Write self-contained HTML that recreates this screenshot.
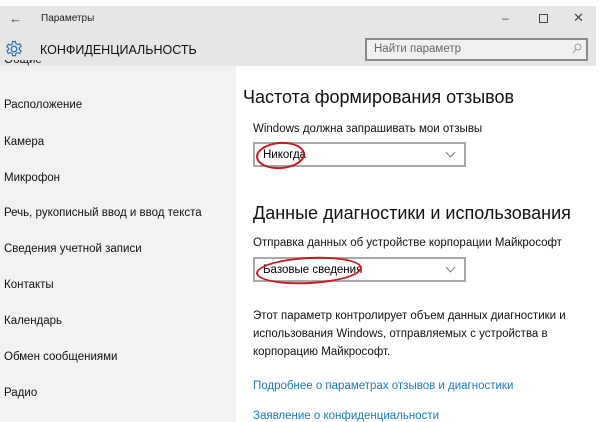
<!DOCTYPE html>
<html><head><meta charset="utf-8"><style>
*{margin:0;padding:0;box-sizing:border-box}
body{width:611px;height:422px;background:#fff;position:relative;overflow:hidden;font-family:"Liberation Sans","DejaVu Sans",sans-serif;color:#000}
.a{position:absolute;white-space:nowrap}
#hdr{position:absolute;left:0;top:6px;width:596px;height:60px;background:#e6e6e6}
#side{position:absolute;left:0;top:66px;width:236px;height:356px;background:#f2f2f2}
.si{position:absolute;left:4px;font-size:11.5px;color:#111}
.dd{position:absolute;left:253px;width:213px;height:25px;border:2px solid #a8a8a8;background:#fff;font-size:11.5px;padding:5px 0 0 8px}
.dd:after{content:"";position:absolute;right:10px;top:5px;width:6px;height:6px;border-right:1px solid #777;border-bottom:1px solid #777;transform:rotate(45deg)}
.ov{position:absolute;border:2px solid #c8191e;border-radius:50%}
.h{font-size:18px;color:#111;left:243px}
.l{font-size:11.5px;left:253px;color:#111}
.lk{font-size:11.5px;left:253px;color:#1a7ac0}
</style></head><body>
<div id="hdr"></div>
<div id="side"></div>
<div class="a" style="left:9px;top:11px;font-size:13px;color:#333">←</div>
<div class="a" style="left:41px;top:13px;font-size:10px;color:#222">Параметры</div>
<div class="a" style="left:502px;top:11px;font-size:12px;color:#444">–</div>
<div class="a" style="left:539px;top:14px;width:9px;height:9px;border:1px solid #444"></div>
<div class="a" style="left:573px;top:10px;font-size:13px;color:#444">✕</div>
<svg class="a" style="left:5px;top:40px" width="18" height="18" viewBox="0 0 18 18"><circle cx="9" cy="9" r="2.8" fill="none" stroke="#2b74c0" stroke-width="1.3"/><path d="M7.6 1.5h2.8l.5 2.2 1.7.9 2.1-.8 1.4 2.4-1.7 1.5v1.8l1.7 1.5-1.4 2.4-2.1-.8-1.7.9-.5 2.2H7.6l-.5-2.2-1.7-.9-2.1.8-1.4-2.4 1.7-1.5V8.2L1.9 6.7l1.4-2.4 2.1.8 1.7-.9z" fill="none" stroke="#2b74c0" stroke-width="1.2"/></svg>
<div class="a" style="left:40px;top:43px;font-size:12.5px;color:#111">КОНФИДЕНЦИАЛЬНОСТЬ</div>
<div class="a" style="left:365px;top:38px;width:223px;height:23px;border:2px solid #8a8a8a;background:#f0f0f0;font-size:11.5px;color:#666;padding:3px 0 0 7px">Найти параметр</div>
<svg class="a" style="left:572px;top:43px" width="10" height="11" viewBox="0 0 10 11"><circle cx="6" cy="4" r="3" fill="none" stroke="#999" stroke-width="1"/><path d="M4 6.2L1 10" stroke="#999" stroke-width="1"/></svg>
<div class="si" style="top:60px;height:7px;overflow:hidden;line-height:0">Общие</div>
<div class="si" style="top:99px">Расположение</div>
<div class="si" style="top:136px">Камера</div>
<div class="si" style="top:172px">Микрофон</div>
<div class="si" style="top:207px">Речь, рукописный ввод и ввод текста</div>
<div class="si" style="top:243px">Сведения учетной записи</div>
<div class="si" style="top:279px">Контакты</div>
<div class="si" style="top:315px">Календарь</div>
<div class="si" style="top:351px">Обмен сообщениями</div>
<div class="si" style="top:387px">Радио</div>
<div class="a h" style="top:87px">Частота формирования отзывов</div>
<div class="a l" style="top:123px">Windows должна запрашивать мои отзывы</div>
<div class="dd" style="top:142px">Никогда</div>
<div class="ov" style="left:256px;top:142px;width:49px;height:27px;transform:rotate(-4deg)"></div>
<div class="a h" style="left:253px;top:203px">Данные диагностики и использования</div>
<div class="a l" style="top:237px">Отправка данных об устройстве корпорации Майкрософт</div>
<div class="dd" style="top:257px">Базовые сведения</div>
<div class="ov" style="left:256px;top:257px;width:106px;height:27px;transform:rotate(-3deg)"></div>
<div class="a l" style="top:307px;line-height:18px">Этот параметр контролирует объем данных диагностики и<br>использования Windows, отправляемых с устройства в<br>корпорацию Майкрософт.</div>
<div class="a lk" style="top:380px">Подробнее о параметрах отзывов и диагностики</div>
<div class="a lk" style="top:410px">Заявление о конфиденциальности</div>
</body></html>
